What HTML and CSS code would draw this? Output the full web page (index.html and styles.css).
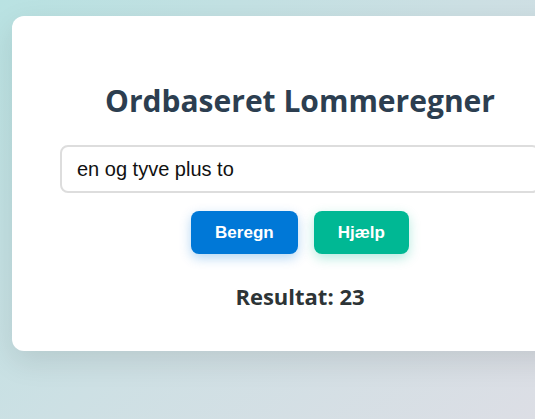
FILE: index.html
```html
<!DOCTYPE html>
<html lang="da">
<head>
<meta charset="utf-8">
<title>Ordbaseret Lommeregner</title>
<link rel="stylesheet" href="styles.css">
</head>
<body>
<main class="card">
  <h1 class="title">Ordbaseret Lommeregner</h1>
  <input class="entry" type="text" value="en og tyve plus to">
  <div class="actions">
    <button class="btn btn-calc">Beregn</button>
    <button class="btn btn-help">Hjælp</button>
  </div>
  <p class="result">Resultat: 23</p>
</main>
</body>
</html>
```
FILE: styles.css
```css
html, body {
  margin: 0;
  height: 100%;
}
body {
  background: linear-gradient(135deg, #b9e2e2 0%, #cde0e4 50%, #dcdee5 100%);
  padding: 16px 0 0 12px;
  box-sizing: border-box;
  overflow: hidden;
  font-family: "Open Sans", "Noto Sans", sans-serif;
}
.card {
  width: 480px;
  padding: 40px 48px 39px;
  background: #fff;
  border-radius: 12px;
  box-shadow: 0 10px 30px rgba(0, 0, 0, 0.1);
  display: flex;
  flex-direction: column;
  align-items: center;
}
.title {
  margin: 24px 0 24px;
  font-size: 30px;
  font-weight: 700;
  color: #2c3e50;
  line-height: 41px;
}
.entry {
  width: 100%;
  box-sizing: border-box;
  height: 48px;
  padding: 0 15px;
  border: 2px solid #ddd;
  border-radius: 8px;
  font-family: "Liberation Sans", Arial, sans-serif;
  font-size: 20px;
  color: #111;
  outline: none;
}
.actions {
  display: flex;
  gap: 16px;
  margin-top: 18px;
}
.btn {
  border: 0;
  border-radius: 8px;
  height: 43px;
  padding: 0 24px;
  font-family: "Liberation Sans", Arial, sans-serif;
  font-size: 17px;
  font-weight: 700;
  color: #fff;
}
.btn-calc {
  background: #0078d7;
  box-shadow: 0 4px 12px rgba(0, 120, 215, 0.3);
}
.btn-help {
  background: #00b894;
  box-shadow: 0 4px 12px rgba(0, 184, 148, 0.3);
}
.result {
  margin: 26px 0 0;
  font-size: 22px;
  font-weight: 700;
  color: #2d3436;
  line-height: 32px;
}
```
